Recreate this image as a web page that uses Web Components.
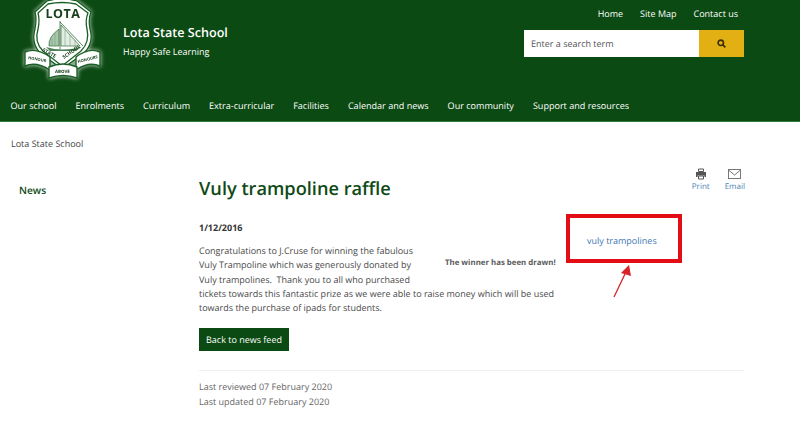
<!DOCTYPE html>
<html lang="en"><head><meta charset="utf-8"><title>Vuly trampoline raffle</title>
<style>
html,body{margin:0;padding:0;background:#fff;height:430px;overflow:hidden}
body{font-family:"Open Sans",sans-serif;color:#3c3c3c;font-size:9px;text-rendering:geometricPrecision}
</style></head><body>
<school-header></school-header>
<school-page></school-page>
<script>
class Base extends HTMLElement{
  constructor(){super();this.attachShadow({mode:'open'}).innerHTML=this.constructor.markup;}
}
class SchoolLogo extends Base{static markup=`<style>:host{display:block;width:80px;height:84px;filter:drop-shadow(0 0 2px rgba(255,255,255,.8))}svg{display:block}text{font-family:"Open Sans",sans-serif;font-weight:700;fill:#17401b}</style>
<svg width="80" height="84" viewBox="0 0 80 84">
<path d="M13 13 L25 2 Q40 -2 55 2 L69 13 Q66 20 68 30 Q72 44 62 54 L40 70 L18 54 Q9 44 13 30 Q15 20 13 13Z" fill="#fff" stroke="#0f5a1a" stroke-width="1.2"/>
<path d="M16 14 L26 5 Q40 2 54 5 L66 14 Q63 21 65 30 Q68 43 59 52 L40 67 L21 52 Q12 43 16 30 Q18 21 16 14Z" fill="none" stroke="#1a5f25" stroke-width="1.3"/>
<text x="41" y="19" font-size="12.5" text-anchor="middle" letter-spacing=".5">LOTA</text>
<path d="M38 22 L38 50 M38 23 L61 47" stroke="#2f6a38" stroke-width=".8" fill="none"/>
<path d="M39 26 L58 47 L39 47Z" fill="#e4ede4" stroke="#2f6a38" stroke-width=".7"/>
<path d="M37 30 Q26 38 27 47 L37 47Z" fill="#a9c6ac" stroke="#2f6a38" stroke-width=".7"/>
<path d="M33 34 V47 M30 39 V47 M43 31 V47 M48 36 V47 M53 41 V47" stroke="#7ba283" stroke-width=".6"/>
<path d="M24 48 Q40 53 59 48 L54 52 L28 52Z" fill="#4f8057"/>
<text x="20" y="52" font-size="5" transform="rotate(28 20 52)">STATE</text>
<text x="42" y="60" font-size="5" transform="rotate(-35 42 60)">SCHOOL</text>
<path d="M3 53 Q14 48 28 58 L28 71 Q14 62 3 67Z" fill="#fff" stroke="#1a5f25" stroke-width="1.4"/>
<path d="M78 53 Q67 48 54 58 L54 71 Q67 62 78 67Z" fill="#fff" stroke="#1a5f25" stroke-width="1.4"/>
<path d="M27 68 Q41 62 55 68 L55 79 Q41 74 27 79Z" fill="#fff" stroke="#1a5f25" stroke-width="1.4"/>
<text x="6" y="60" font-size="4" transform="rotate(10 6 60)">HONOUR</text>
<text x="56" y="64" font-size="4" transform="rotate(-14 56 64)">HONOURS</text>
<text x="33" y="74" font-size="4.4">ABOVE</text>
</svg>`}
class SearchBox extends Base{static markup=`<style>:host{display:flex;width:220px;height:27px;background:#fff}
.t{flex:1;font-size:9px;line-height:27px;padding-left:7px;color:#555}
.b{width:45px;background:#e2b013;display:flex;align-items:center;justify-content:center}</style>
<div class="t">Enter a search term</div><div class="b"><svg width="9" height="9" viewBox="0 0 10 10" fill="none" stroke="#3a2c05" stroke-width="1.8"><circle cx="4.2" cy="4.2" r="3"/><path d="M6.5 6.5L9.3 9.3"/></svg></div>`}
class SchoolHeader extends Base{static markup=`<style>
:host{display:block;height:122px;background:#0b4a12;color:#fff;border-bottom:1px solid #2f7a3a;box-sizing:border-box}
.top{display:flex;height:99px}
.logo{margin:-1px 0 0 22px}
.brand{margin-left:21px;padding-top:24px}
.name{font-size:12.6px;font-weight:600;line-height:18px}
.tag{font-size:9px;line-height:14px;margin-top:3px}
.right{margin-left:auto;margin-right:56px;display:flex;flex-direction:column;align-items:flex-end;padding-top:7px}
.links{display:flex;gap:17px;font-size:9px;line-height:14px;margin-right:6px;margin-bottom:9px}
nav{display:flex;gap:19px;padding-left:10.5px;font-size:9.05px;line-height:14px;margin-top:0}
</style>
<div class="top"><school-logo class="logo"></school-logo>
<div class="brand"><div class="name">Lota State School</div><div class="tag">Happy Safe Learning</div></div>
<div class="right"><div class="links"><span>Home</span><span>Site Map</span><span>Contact us</span></div><search-box></search-box></div></div>
<nav><span>Our school</span><span>Enrolments</span><span>Curriculum</span><span>Extra-curricular</span><span>Facilities</span><span>Calendar and news</span><span>Our community</span><span>Support and resources</span></nav>`}
class PageTools extends Base{static markup=`<style>:host{display:flex;gap:15px;position:absolute;right:55px;top:168px;font-size:8px;line-height:11px;color:#4a7fb5;text-align:center}
div{display:flex;flex-direction:column;align-items:center;gap:1px}</style>
<div><svg width="12" height="12" viewBox="0 0 12 12" fill="#555"><path d="M3.5 1H8.5V3.5H3.5Z" fill="none" stroke="#555"/><path d="M1 4H11V9H9.5V7.5H2.5V9H1Z"/><path d="M3.5 8H8.5V11H3.5Z" fill="none" stroke="#555"/></svg><span>Print</span></div>
<div><svg width="13" height="12" viewBox="0 0 13 12" fill="none" stroke="#777"><rect x=".5" y="1.5" width="12" height="9"/><path d="M.5 2L6.5 7L12.5 2"/></svg><span>Email</span></div>`}
class RedCallout extends Base{static markup=`<style>:host{display:block;position:absolute;left:566px;top:214px;width:116px;height:49px;box-sizing:border-box;border:4px solid #e30d16}
.l{position:absolute;left:17px;top:16px;font-size:9px;line-height:14px;color:#3f78b5;white-space:nowrap}
svg{position:absolute;left:40px;top:45px}</style>
<span class="l">vuly trampolines</span>
<svg width="24" height="36" viewBox="0 0 24 36"><path d="M4 34L15 11" stroke="#d8232a" stroke-width="1.3"/><path d="M19 2L21 13L11 10Z" fill="#d8232a"/></svg>`}
class NewsArticle extends Base{static markup=`<style>:host{display:block;width:545px}
h1{margin:0;font-size:18.2px;font-weight:600;line-height:27px;color:#0f4a16;position:relative;top:1px}
.date{font-size:9px;font-weight:700;line-height:14px;margin-top:19px;color:#333}
.body{margin-top:9px;font-size:9px;line-height:14.3px;color:#4a4a4a;width:356px;position:relative}
.win{position:absolute;left:246px;top:14px;font-size:7.85px;font-weight:700;line-height:11px;white-space:nowrap;color:#5a5a5a}
.btn{display:inline-block;background:#0b4a12;color:#fff;font-size:9px;line-height:23px;padding:0 7px;margin-top:13px}
.foot{margin-top:19px;border-top:1px solid #eee;padding-top:9px;font-size:9px;line-height:14.3px;color:#666}
</style>
<h1>Vuly trampoline raffle</h1>
<div class="date">1/12/2016</div>
<div class="body">Congratulations to J.Cruse for winning the fabulous<br>Vuly Trampoline which was generously donated by<br>Vuly trampolines.&nbsp; Thank you to all who purchased<br>tickets towards this fantastic prize as we were able to raise money which will be used towards the purchase of ipads for students.<span class="win">The winner has been drawn!</span></div>
<div class="btn">Back to news feed</div>
<div class="foot">Last reviewed 07 February 2020<br>Last updated 07 February 2020</div>`}
class SchoolPage extends Base{static markup=`<style>:host{display:block}
.crumb{padding:15px 0 0 11px;font-size:9px;line-height:14px;color:#444}
.cols{display:flex;padding-top:24px}
aside{width:199px;padding:7px 0 0 19px;box-sizing:border-box;font-size:10.2px;font-weight:600;line-height:16px;color:#0f4a16}
</style>
<div class="crumb">Lota State School</div>
<div class="cols"><aside>News</aside><news-article></news-article></div>
<page-tools></page-tools><red-callout></red-callout>`}
customElements.define('school-logo',SchoolLogo);
customElements.define('search-box',SearchBox);
customElements.define('school-header',SchoolHeader);
customElements.define('page-tools',PageTools);
customElements.define('red-callout',RedCallout);
customElements.define('news-article',NewsArticle);
customElements.define('school-page',SchoolPage);
</script>
</body></html>
